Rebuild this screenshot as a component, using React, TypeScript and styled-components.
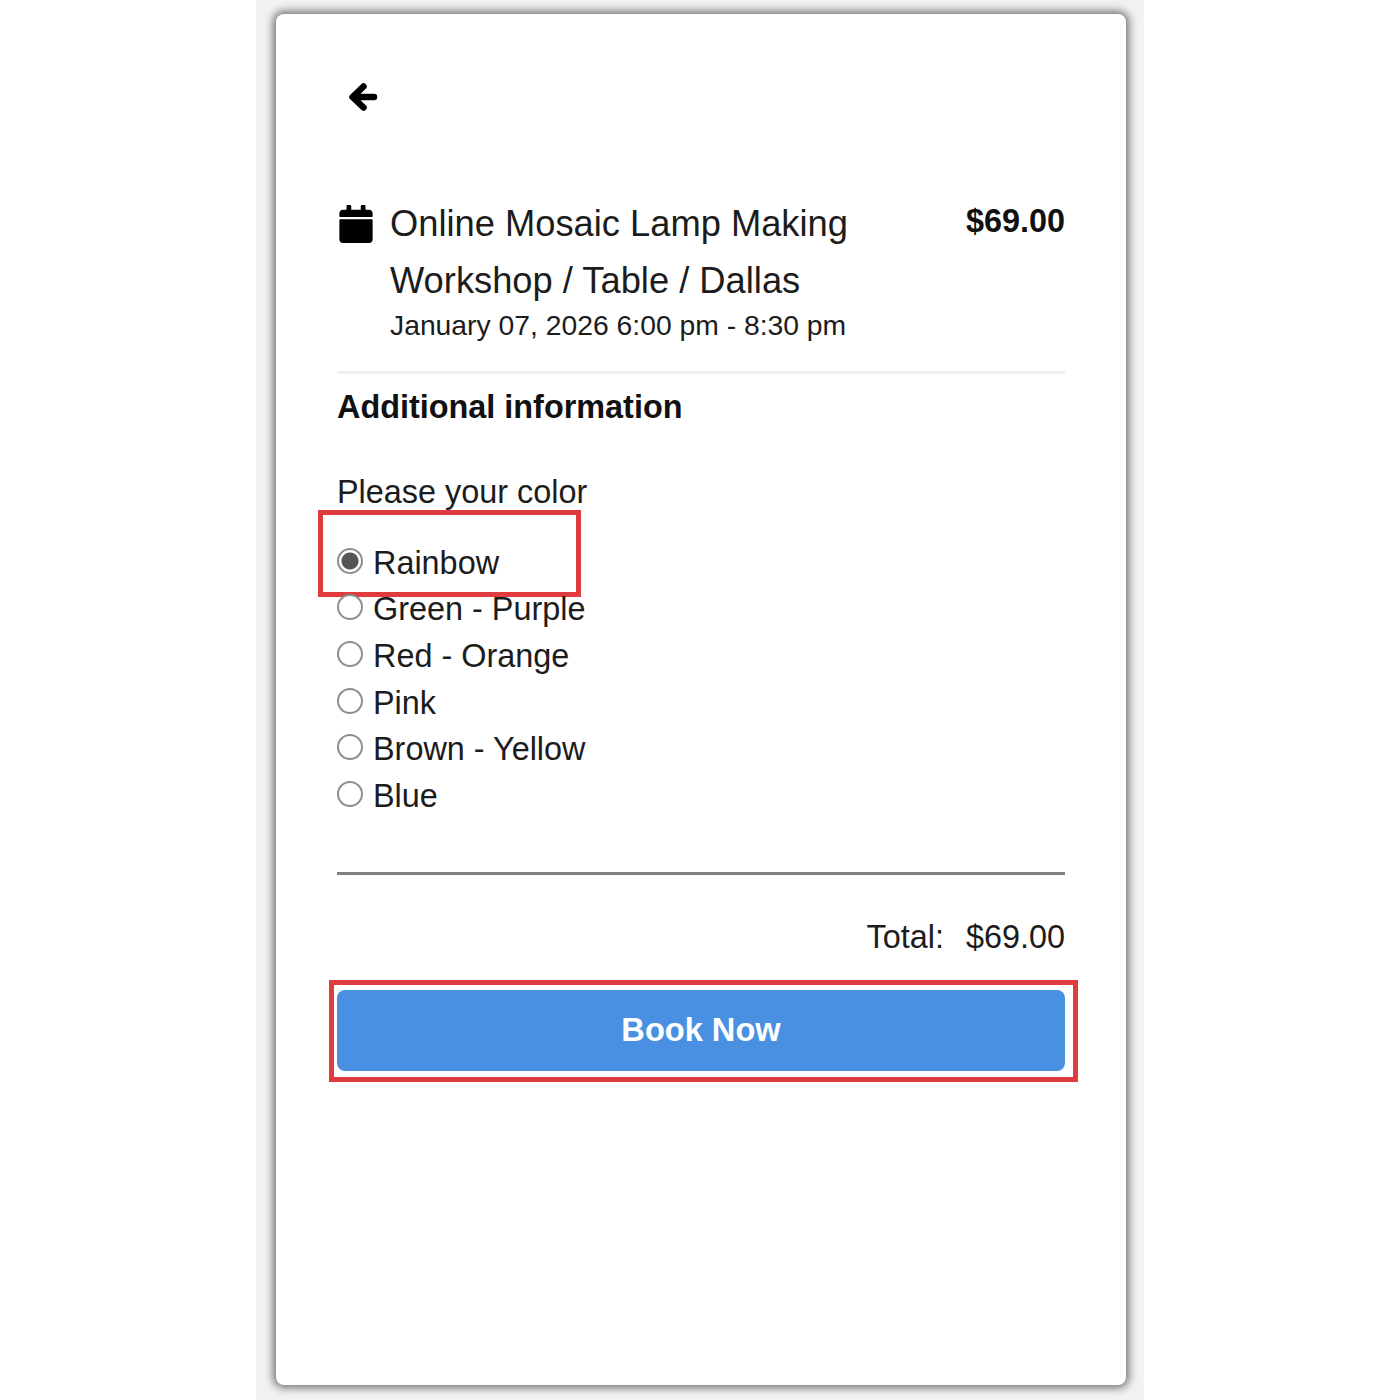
import styled, { createGlobalStyle } from 'styled-components'
import { FaCalendar } from 'react-icons/fa'

const GlobalStyle = createGlobalStyle`
    html, body {
        margin: 0;
        padding: 0;
        background: #ffffff;
    }
    body {
        font-family: "Liberation Sans", Arial, sans-serif;
        color: #1c1c1c;
    }
`
const Backdrop = styled.div`
    width: 888px;
    height: 1400px;
    margin-left: 256px;
    padding: 14px 18px 0 20px;
    box-sizing: border-box;
    background: #f3f2f0;
    overflow: hidden;
`
const Card = styled.main`
    height: 1371px;
    padding: 68px 61px 0;
    box-sizing: border-box;
    background: #ffffff;
    border-radius: 8px;
    box-shadow: 0 0 8px 3px rgba(85, 85, 85, 0.8);
`
const BackButton = styled.button`
    display: block;
    width: 30px;
    height: 30px;
    margin-left: 12px;
    padding: 0;
    border: none;
    background: none;
    color: #000000;
    line-height: 0;
`
const EventRow = styled.section`
    display: grid;
    grid-template-columns: 53px 1fr max-content;
    margin-top: 83px;
    padding-bottom: 29px;
    border-bottom: 3px solid #f0f0f0;
`
const CalendarSlot = styled.div`
    padding: 10px 0 0 0;
    color: #000000;
    font-size: 38px;
    line-height: 0;
`
const EventTitle = styled.h1`
    width: 500px;
    margin: 0;
    font-size: 36.3px;
    font-weight: 400;
    line-height: 57px;
`
const EventDate = styled.div`
    font-size: 28.3px;
    line-height: 33px;
`
const EventPrice = styled.div`
    font-size: 32.4px;
    font-weight: 700;
    line-height: 52px;
    color: #111111;
`
const SectionTitle = styled.h2`
    margin: 14px 0 0;
    font-size: 32.4px;
    font-weight: 700;
    line-height: 38px;
    color: #111111;
`
const FieldLabel = styled.div`
    margin-top: 46px;
    font-size: 32.4px;
    line-height: 40px;
`
const OptionList = styled.div`
    display: flex;
    flex-direction: column;
    margin-top: 28px;
`
const Option = styled.label`
    position: relative;
    display: flex;
    align-items: center;
    gap: 10px;
    height: 46.6px;
    font-size: 32.4px;
`
const RadioDot = styled.input.attrs({ type: 'radio', name: 'color' })`
    appearance: none;
    width: 26px;
    height: 26px;
    margin: -5px 0 0;
    border: 2px solid #8f8f8f;
    border-radius: 50%;
    background: #ffffff;
    box-sizing: border-box;

    &:checked {
        background: radial-gradient(circle, #555555 0 8px, #ffffff 9px);
    }
`
const RainbowFrame = styled.span`
    position: absolute;
    left: -19px;
    top: -30px;
    width: 263px;
    height: 87px;
    box-sizing: border-box;
    border: 5px solid #e03b3f;
    pointer-events: none;
`
const Divider = styled.hr`
    height: 3px;
    margin: 52.4px 0 0;
    border: none;
    background: #808080;
`
const TotalRow = styled.div`
    display: flex;
    justify-content: flex-end;
    gap: 22px;
    margin-top: 42px;
    font-size: 32.4px;
    line-height: 40px;
`
const ButtonWrap = styled.div`
    position: relative;
    margin-top: 33px;
`
const BookButton = styled.button`
    display: block;
    width: 100%;
    height: 81px;
    border: none;
    border-radius: 8px;
    background: #4a90e2;
    color: #ffffff;
    font-family: inherit;
    font-size: 32.6px;
    font-weight: 700;
`
const ButtonFrame = styled.span`
    position: absolute;
    inset: -10px -13px -11px -8px;
    border: 5px solid #e03b3f;
    pointer-events: none;
`

const BackArrow = () => (
    <svg width="30" height="30" viewBox="0 0 30 30" fill="none" stroke="currentColor"
        strokeWidth="6.5" strokeLinecap="round" strokeLinejoin="round">
        <path d="M14.5 4.5 L3.5 15 L14.5 25.5 M5 15 H25" />
    </svg>
)

const colors = ['Rainbow', 'Green - Purple', 'Red - Orange', 'Pink', 'Brown - Yellow', 'Blue']

export default function App() {
    return (
        <>
            <GlobalStyle />
            <Backdrop>
                <Card>
                    <BackButton aria-label="Back">
                        <BackArrow />
                    </BackButton>
                    <EventRow>
                        <CalendarSlot>
                            <FaCalendar />
                        </CalendarSlot>
                        <div>
                            <EventTitle>Online Mosaic Lamp Making Workshop / Table / Dallas</EventTitle>
                            <EventDate>January 07, 2026 6:00 pm - 8:30 pm</EventDate>
                        </div>
                        <EventPrice>$69.00</EventPrice>
                    </EventRow>
                    <SectionTitle>Additional information</SectionTitle>
                    <FieldLabel>Please your color</FieldLabel>
                    <OptionList>
                        {colors.map((color, index) => (
                            <Option key={color}>
                                <RadioDot defaultChecked={index === 0} />
                                {color}
                                {index === 0 && <RainbowFrame />}
                            </Option>
                        ))}
                    </OptionList>
                    <Divider />
                    <TotalRow>
                        <span>Total:</span>
                        <span>$69.00</span>
                    </TotalRow>
                    <ButtonWrap>
                        <BookButton>Book Now</BookButton>
                        <ButtonFrame />
                    </ButtonWrap>
                </Card>
            </Backdrop>
        </>
    )
}
